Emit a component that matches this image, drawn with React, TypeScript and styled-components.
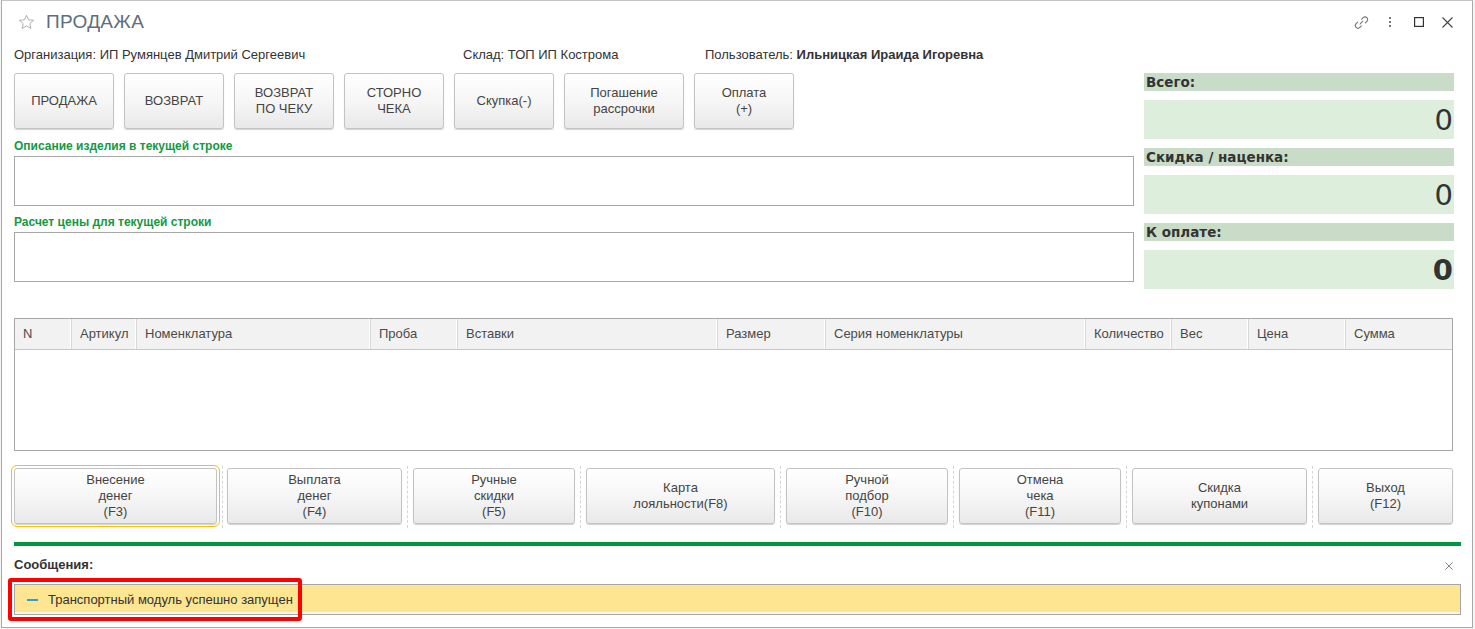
import React from 'react';
import styled, { createGlobalStyle } from 'styled-components';

const GlobalStyle = createGlobalStyle`
  html, body { margin: 0; padding: 0; background: #f4f4f4; }
  body { font-family: Arial, "Liberation Sans", sans-serif; color: #333; }
  * { box-sizing: border-box; }
`;

// --- окно ---
const Window = styled.div`
  position: relative;
  margin-left: 1px;
  width: 1472px;
  height: 628px;
  background: #fff;
  border: 1px solid #a9a9a9;
  border-top-color: #c4c4c4;
  padding: 0 18px 0 12px;
  display: flex;
  flex-direction: column;
`;

const TitleBar = styled.div`
  height: 42px;
  display: flex;
  align-items: center;
  padding-left: 4px;
`;

const Title = styled.h1`
  margin: 0 0 0 11px;
  font-size: 19px;
  font-weight: 400;
  color: #5f6d7c;
  letter-spacing: 0.3px;
  flex: 1;
`;

const TitleTools = styled.div`
  display: flex;
  align-items: center;
  margin-right: -6px;
`;

const ToolButton = styled.span<{ w: number }>`
  width: ${(p) => p.w}px;
  height: 20px;
  display: flex;
  align-items: center;
  justify-content: center;
  color: #666;
`;

const InfoRow = styled.div`
  display: flex;
  height: 22px;
  align-items: center;
  font-size: 13px;
  color: #333;
  margin-bottom: 8px;
`;

const InfoItem = styled.div<{ w?: number }>`
  width: ${(p) => (p.w ? `${p.w}px` : 'auto')};
  white-space: nowrap;
`;

const Strong = styled.b`
  color: #333;
`;

// --- верхняя часть ---
const TopGrid = styled.div`
  display: grid;
  grid-template-columns: 1120px 310px;
  column-gap: 10px;
`;

const LeftCol = styled.div`
  display: flex;
  flex-direction: column;
`;

const ButtonRow = styled.div`
  display: flex;
  gap: 10px;
  margin-bottom: 10px;
`;

const Btn = styled.button<{ w: number; h: number; focused?: boolean }>`
  width: ${(p) => p.w}px;
  height: ${(p) => p.h}px;
  flex: none;
  padding: 0 4px;
  border: 1px solid #c3c3c3;
  border-radius: 3px;
  background: linear-gradient(#ffffff 0%, #f6f6f6 50%, #e9e9e9 100%);
  box-shadow: 0 1px 1px rgba(0, 0, 0, 0.18);
  font-family: Arial, "Liberation Sans", sans-serif;
  font-size: 13px;
  line-height: 16px;
  color: #444;
  text-align: center;
  white-space: pre-line;
  cursor: pointer;
  outline: ${(p) => (p.focused ? '1px solid #f2c300' : 'none')};
  outline-offset: 2px;
`;

const GreenLabel = styled.div`
  font-size: 12px;
  font-weight: 700;
  color: #14993f;
  height: 14px;
  line-height: 14px;
  margin-bottom: 3px;
`;

const TextBox = styled.div<{ mb?: number }>`
  height: 50px;
  border: 1px solid #a6a6a6;
  background: #fff;
  margin-bottom: ${(p) => p.mb ?? 0}px;
`;

const RightCol = styled.div`
  display: flex;
  flex-direction: column;
  gap: 9px;
`;

const Group = styled.div`
  display: flex;
  flex-direction: column;
  gap: 9px;
`;

const SumLabel = styled.div`
  height: 18px;
  background: #c9dcc8;
  padding-left: 2px;
  font-family: "DejaVu Sans", Verdana, sans-serif;
  font-size: 13.5px;
  font-weight: 700;
  line-height: 18px;
  color: #333;
  white-space: nowrap;
`;

const SumValue = styled.div<{ bold?: boolean }>`
  height: 39px;
  background: #ddefdc;
  padding-right: 1px;
  text-align: right;
  font-family: "DejaVu Sans", Verdana, sans-serif;
  font-size: 29px;
  font-weight: ${(p) => (p.bold ? 700 : 400)};
  line-height: 41px;
  color: #333;
`;

// --- таблица ---
const Table = styled.div`
  margin-top: 29px;
  width: 1439px;
  height: 133px;
  border: 1px solid #a6a6a6;
  display: flex;
  flex-direction: column;
`;

const HeadRow = styled.div`
  display: flex;
  height: 31px;
  background: #f2f2f2;
  border-bottom: 1px solid #c8c8c8;
`;

const HeadCell = styled.div<{ w: number }>`
  width: ${(p) => p.w}px;
  flex: none;
  padding-left: 8px;
  font-size: 13px;
  line-height: 30px;
  color: #4a4a4a;
  border-right: 1px solid #d8d8d8;
  box-shadow: inset -1px 0 0 #fff;
  white-space: nowrap;
  overflow: hidden;
  &:last-child { border-right: none; box-shadow: none; }
`;

// --- нижние кнопки ---
const CmdBar = styled.div`
  margin-top: 17px;
  display: flex;
  height: 56px;
`;

const Sep = styled.div<{ w: number }>`
  width: ${(p) => p.w}px;
  flex: none;
  display: flex;
  justify-content: center;
  margin-top: -2px;
  height: 62px;
  &::before {
    content: '';
    border-left: 1px dashed #d6d6d6;
  }
`;

const GreenLine = styled.div`
  margin-top: 18px;
  width: 1447px;
  height: 4px;
  background: #00963f;
`;

const MsgHeader = styled.div`
  margin-top: 10px;
  width: 1447px;
  height: 16px;
  display: flex;
  align-items: center;
  justify-content: space-between;
  font-size: 13px;
  font-weight: 700;
  color: #333;
`;

const MsgClose = styled.span`
  color: #666;
  display: flex;
  margin-right: 8px;
  margin-top: 4px;
`;

const MsgWrap = styled.div`
  position: relative;
  margin-top: 12px;
  width: 1447px;
`;

const MsgBar = styled.div`
  height: 31px;
  border: 1px solid #a6a6a6;
  background: #fde591;
  box-shadow: inset 0 -2px 0 #fbf6e6;
  display: flex;
  align-items: center;
  padding-left: 12px;
  font-size: 13px;
  color: #333;
`;

const Dash = styled.span`
  width: 11px;
  height: 2px;
  background: #2b9fdf;
  margin-right: 10px;
`;

const Highlight = styled.div`
  position: absolute;
  left: -6px;
  top: -6px;
  width: 294px;
  height: 43px;
  border: 4px solid #ff0000;
  border-radius: 3px;
  pointer-events: none;
`;

const topButtons = [
  { t: 'ПРОДАЖА', w: 100 },
  { t: 'ВОЗВРАТ', w: 100 },
  { t: 'ВОЗВРАТ\nПО ЧЕКУ', w: 100 },
  { t: 'СТОРНО\nЧЕКА', w: 100 },
  { t: 'Скупка(-)', w: 100 },
  { t: 'Погашение\nрассрочки', w: 120 },
  { t: 'Оплата\n(+)', w: 100 },
];

const columns = [
  { t: 'N', w: 57 },
  { t: 'Артикул', w: 65 },
  { t: 'Номенклатура', w: 234 },
  { t: 'Проба', w: 87 },
  { t: 'Вставки', w: 260 },
  { t: 'Размер', w: 108 },
  { t: 'Серия номенклатуры', w: 260 },
  { t: 'Количество', w: 86 },
  { t: 'Вес', w: 77 },
  { t: 'Цена', w: 97 },
  { t: 'Сумма', w: 106 },
];

const commands = [
  { t: 'Внесение\nденег\n(F3)', w: 203 },
  { t: 'Выплата\nденег\n(F4)', w: 175 },
  { t: 'Ручные\nскидки\n(F5)', w: 162 },
  { t: 'Карта\nлояльности(F8)', w: 189 },
  { t: 'Ручной\nподбор\n(F10)', w: 162 },
  { t: 'Отмена\nчека\n(F11)', w: 162 },
  { t: 'Скидка\nкупонами', w: 175 },
  { t: 'Выход\n(F12)', w: 135 },
];

const totals = [
  { label: 'Всего:', value: '0' },
  { label: 'Скидка / наценка:', value: '0' },
  { label: 'К оплате:', value: '0', bold: true },
];

const StarIcon = () => (
  <svg width="17" height="16" viewBox="0 0 17 16" fill="none" stroke="#b0b0b0" strokeWidth="1">
    <path d="M8.5 1.2l2.1 4.6 5 .5-3.8 3.3 1.1 4.9-4.4-2.6-4.4 2.6 1.1-4.9L1.4 6.3l5-.5z" strokeLinejoin="round" />
  </svg>
);

const LinkIcon = () => (
  <svg width="17" height="17" viewBox="0 0 17 17" fill="none" stroke="#777" strokeWidth="1.1" strokeLinecap="round">
    <path d="M7.2 9.8l2.6-2.6" />
    <path d="M8.6 5.2l1.6-1.6a2.6 2.6 0 013.7 3.7l-1.6 1.6" />
    <path d="M8.4 11.8l-1.6 1.6a2.6 2.6 0 01-3.7-3.7l1.6-1.6" />
  </svg>
);

const DotsIcon = () => (
  <svg width="4" height="12" viewBox="0 0 4 12" fill="#777">
    <rect x="1" y="1" width="2" height="2" />
    <rect x="1" y="5" width="2" height="2" />
    <rect x="1" y="9" width="2" height="2" />
  </svg>
);

const SquareIcon = () => (
  <svg width="10" height="10" viewBox="0 0 10 10" fill="none" stroke="#333" strokeWidth="1.2">
    <rect x="0.6" y="0.6" width="8.8" height="8.8" />
  </svg>
);

const CrossIcon = ({ size = 11, color = '#444' }: { size?: number; color?: string }) => (
  <svg width={size} height={size} viewBox="0 0 11 11" fill="none" stroke={color} strokeWidth="1.1">
    <path d="M0.5 0.5l10 10M10.5 0.5l-10 10" />
  </svg>
);

export default function App() {
  return (
    <>
      <GlobalStyle />
      <Window>
        <TitleBar>
          <StarIcon />
          <Title>ПРОДАЖА</Title>
          <TitleTools>
            <ToolButton w={30}><LinkIcon /></ToolButton>
            <ToolButton w={28}><DotsIcon /></ToolButton>
            <ToolButton w={30}><SquareIcon /></ToolButton>
            <ToolButton w={26}><CrossIcon /></ToolButton>
          </TitleTools>
        </TitleBar>

        <InfoRow>
          <InfoItem w={449}>Организация: ИП Румянцев Дмитрий Сергеевич</InfoItem>
          <InfoItem w={242}>Склад: ТОП ИП Кострома</InfoItem>
          <InfoItem>Пользователь: <Strong>Ильницкая Ираида Игоревна</Strong></InfoItem>
        </InfoRow>

        <TopGrid>
          <LeftCol>
            <ButtonRow>
              {topButtons.map((b) => (
                <Btn key={b.t} w={b.w} h={56}>{b.t}</Btn>
              ))}
            </ButtonRow>
            <GreenLabel>Описание изделия в текущей строке</GreenLabel>
            <TextBox mb={9} />
            <GreenLabel>Расчет цены для текущей строки</GreenLabel>
            <TextBox />
          </LeftCol>

          <RightCol>
            {totals.map((g) => (
              <Group key={g.label}>
                <SumLabel>{g.label}</SumLabel>
                <SumValue bold={g.bold}>{g.value}</SumValue>
              </Group>
            ))}
          </RightCol>
        </TopGrid>

        <Table>
          <HeadRow>
            {columns.map((c) => (
              <HeadCell key={c.t} w={c.w}>{c.t}</HeadCell>
            ))}
          </HeadRow>
        </Table>

        <CmdBar>
          {commands.map((c, i) => (
            <React.Fragment key={c.t}>
              {i > 0 && <Sep w={i === 1 ? 10 : 11} />}
              <Btn w={c.w} h={56} focused={i === 0}>{c.t}</Btn>
            </React.Fragment>
          ))}
        </CmdBar>

        <GreenLine />

        <MsgHeader>
          <span>Сообщения:</span>
          <MsgClose><CrossIcon size={8} color="#666" /></MsgClose>
        </MsgHeader>

        <MsgWrap>
          <MsgBar>
            <Dash />
            Транспортный модуль успешно запущен
          </MsgBar>
          <Highlight />
        </MsgWrap>
      </Window>
    </>
  );
}
